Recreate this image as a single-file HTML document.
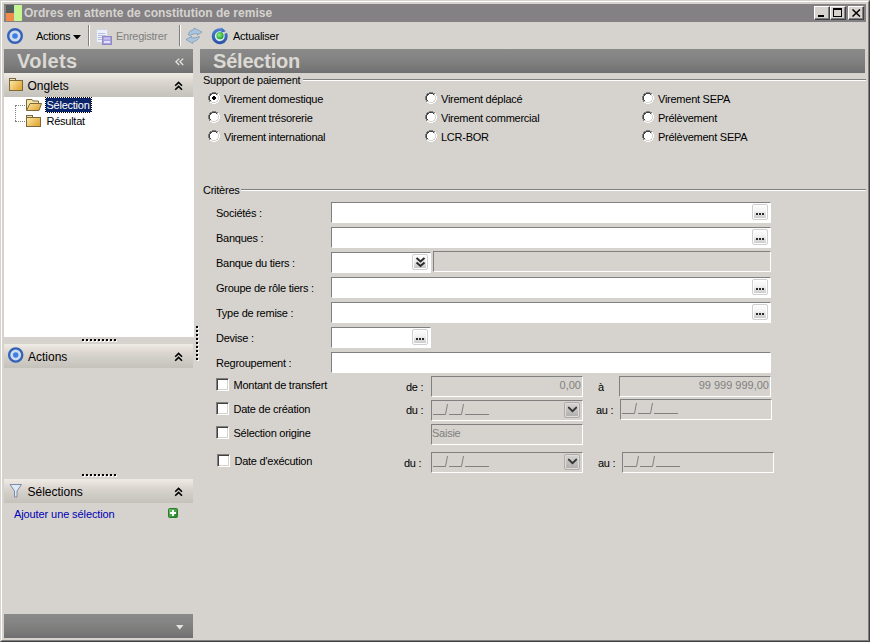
<!DOCTYPE html>
<html><head><meta charset="utf-8">
<style>
*{margin:0;padding:0;box-sizing:border-box}
html,body{width:870px;height:642px;overflow:hidden;background:#d6d3ce;font-family:"Liberation Sans",sans-serif;font-size:11px;color:#000}
.a{position:absolute}
.t{position:absolute;white-space:nowrap;line-height:13px;font-size:11px;letter-spacing:-0.25px}
.hd{position:absolute;background:linear-gradient(#8a8a8a,#848484 35%,#7b7b7a 70%,#6f6f71)}
.hl{position:absolute;background:linear-gradient(#eeebe5,#e8e3dd 15%,#ddd7d1 35%,#d1cdc7 60%,#c5c1bb)}
.inp{position:absolute;background:#fff;border-top:1px solid #808080;border-left:1px solid #808080;border-right:1px solid #fff;border-bottom:1px solid #fff}
.dis{position:absolute;background:#d6d3ce;border-top:1px solid #808080;border-left:1px solid #808080;border-right:1px solid #fff;border-bottom:1px solid #fff}
.ell{position:absolute;width:16px;height:16px;border:1px solid #cfcfcf;border-radius:2px;background:linear-gradient(#fdfdfd,#f4f4f4 40%,#c6c6c6);box-shadow:inset 0 0 0 1px #fff}
.chk{position:absolute;width:13px;height:13px;background:#fff;border-top:1px solid #808080;border-left:1px solid #808080;border-right:1px solid #fff;border-bottom:1px solid #fff;box-shadow:inset 1px 1px 0 #404040, inset -1px -1px 0 #d6d3ce}
.gl{position:absolute;height:2px;border-top:1px solid #808080;border-bottom:1px solid #fff}
.big{position:absolute;white-space:nowrap;font-size:19px;font-weight:bold;color:#dcd9d4;line-height:22px}
.dd{position:absolute;width:16px;height:16px;border:1px solid #cfcfcf;border-radius:2px;background:linear-gradient(#fdfdfd,#f0f0f0 40%,#c0c0c0);box-shadow:inset 0 0 0 1px #fff}
.ddd{position:absolute;width:16px;height:16px;border:1px solid #aeacaa;border-radius:2px;background:linear-gradient(#d6d4d2,#b0aeac);box-shadow:inset 0 0 0 1px #dedcda}
.gray{color:#808080}
.cb{position:absolute;width:16px;height:14px;background:#d6d3ce;border-top:1px solid #fff;border-left:1px solid #fff;border-right:1px solid #404040;border-bottom:1px solid #404040;box-shadow:inset -1px -1px 0 #808080}
</style></head><body>
<div class="a" style="left:0;top:0;width:870px;height:642px;border-top:1px solid #d6d3ce;border-left:1px solid #d6d3ce;border-right:1px solid #404040;border-bottom:1px solid #404040"></div>
<div class="a" style="left:1px;top:1px;width:868px;height:640px;border-top:1px solid #fff;border-left:1px solid #fff;border-right:1px solid #808080;border-bottom:1px solid #808080"></div>
<div class="a" style="left:4px;top:4px;width:862px;height:18px;background:#838184"></div>
<div class="a" style="left:6px;top:5px;width:8px;height:8px;background:#575d5b"></div>
<div class="a" style="left:6px;top:13px;width:8px;height:8px;background:#f28a4c"></div>
<div class="a" style="left:14px;top:5px;width:8px;height:16px;background:linear-gradient(90deg,#b8f0c0 0 1px,#c6f68e 1px)"></div>
<div class="t" style="left:24px;top:7px;font-weight:bold;color:#d6d3ce;letter-spacing:0;font-size:12px">Ordres en attente de constitution de remise</div>
<div class="cb" style="left:814px;top:6px"><div class="a" style="left:3px;top:8px;width:6px;height:2px;background:#000"></div></div>
<div class="cb" style="left:830px;top:6px"><div class="a" style="left:2px;top:1px;width:9px;height:9px;border:1px solid #000;border-top-width:2px"></div></div>
<div class="cb" style="left:848px;top:6px"><svg class="a" style="left:3px;top:2px" width="9" height="8" viewBox="0 0 9 8"><path d="M0.5 0.5L8 7.5M8 0.5L0.5 7.5" stroke="#000" stroke-width="1.5"/></svg></div>
<svg class="a" style="left:6px;top:27px" width="18" height="18" viewBox="0 0 18 18"><circle cx="9" cy="9" r="6.8" fill="#cfdcf0" stroke="#3562b6" stroke-width="2.4"/><circle cx="9" cy="9" r="2.8" fill="#3f7fe0"/></svg>
<div class="t" style="left:36px;top:30px">Actions</div>
<svg class="a" style="left:73px;top:35px" width="8" height="5"><path d="M0 0H8L4 4.5Z" fill="#000"/></svg>
<div class="a" style="left:88px;top:25px;width:2px;height:21px;border-left:1px solid #808080;border-right:1px solid #fff"></div>
<svg class="a" style="left:95px;top:27px" width="18" height="19" viewBox="0 0 18 19"><rect x="1.5" y="2.5" width="11" height="13" fill="#eef0f8" stroke="#d0d4e4"/><path d="M3 6.5H10M3 8.5H11M3 10.5H9M3 12.5H8" stroke="#b0b8dc" stroke-width="0.9"/><rect x="7.5" y="9.5" width="9" height="8" fill="#a8a0d8" stroke="#9088c8"/><rect x="9" y="14" width="6" height="2" fill="#e4e0fa"/><rect x="9" y="10.5" width="6" height="2" fill="#c8c4ec"/></svg>
<div class="t gray" style="left:116px;top:30px">Enregistrer</div>
<div class="a" style="left:179px;top:25px;width:2px;height:21px;border-left:1px solid #808080;border-right:1px solid #fff"></div>
<svg class="a" style="left:182px;top:25px" width="24" height="22" viewBox="0 0 24 22"><path d="M6 9.5Q7 5.5 12 4.5V3L20 7L15.5 10V8.5Q11 8.5 8 10.5Z" fill="#a9c6de" stroke="#7f98b8" stroke-width="0.8" stroke-linejoin="round"/><path d="M4 14.5L9.5 11.5V13Q14 13 17.5 11.5Q16.5 15.5 10.5 17V18.5Z" fill="#a9c6de" stroke="#7f98b8" stroke-width="0.8" stroke-linejoin="round"/></svg>
<svg class="a" style="left:210px;top:27px" width="20" height="20" viewBox="0 0 20 20"><defs><radialGradient id="gb" cx="0.4" cy="0.4" r="0.6"><stop offset="0" stop-color="#90f080"/><stop offset="1" stop-color="#20a030"/></radialGradient><linearGradient id="rb" x1="0" y1="0" x2="0" y2="1"><stop offset="0" stop-color="#4a7cd0"/><stop offset="1" stop-color="#2c54a8"/></linearGradient></defs><circle cx="9.8" cy="9.2" r="5.3" fill="#d8ecf0"/><path d="M15.69 6.45A6.5 6.5 0 1 1 11.48 2.92" fill="none" stroke="url(#rb)" stroke-width="3"/><path d="M11.5 0.6L15.8 4.2L11.2 5.8Z" fill="#3a6cc8"/><circle cx="10" cy="8.7" r="3.6" fill="url(#gb)"/></svg>
<div class="t" style="left:233px;top:30px">Actualiser</div>
<div class="hd" style="left:4px;top:49px;width:189px;height:24px"></div>
<div class="big" style="left:17px;top:50px;letter-spacing:0.3px;font-size:20px">Volets</div>
<svg class="a" style="left:175px;top:58px" width="10" height="9" viewBox="0 0 10 9"><path d="M4.2 0.6L0.9 3.8L4.2 7M8.2 0.6L4.9 3.8L8.2 7" stroke="#e6e4e0" stroke-width="1.3" fill="none"/></svg>
<div class="hl" style="left:4px;top:73px;width:189px;height:24px"></div>
<svg class="a" style="left:8px;top:77px" width="16" height="15" viewBox="0 0 16 15"><defs><linearGradient id="fg1" x1="0" y1="0" x2="1" y2="0.6"><stop offset="0" stop-color="#fbeaa8"/><stop offset="1" stop-color="#e4a838"/></linearGradient></defs><rect x="1.5" y="1.5" width="6" height="2.5" fill="#ece2c4" stroke="#7c6838"/><rect x="1.5" y="3.5" width="13" height="10" fill="url(#fg1)" stroke="#7c6838"/></svg>
<div class="t" style="left:27.5px;top:80px;font-size:12px;letter-spacing:0">Onglets</div>
<svg class="a" style="left:174px;top:81px" width="10" height="10" viewBox="0 0 10 10"><path d="M1.2 4.8L4.6 1.4L8 4.8M1.2 8.8L4.6 5.4L8 8.8" stroke="#000" stroke-width="1.6" fill="none"/></svg>
<div class="a" style="left:4px;top:97px;width:190px;height:240px;background:#fff"></div>
<div class="a" style="left:15px;top:105px;width:1px;height:16px;border-left:1px dotted #808080"></div>
<div class="a" style="left:15px;top:105px;width:10px;height:1px;border-top:1px dotted #808080"></div>
<div class="a" style="left:15px;top:121px;width:10px;height:1px;border-top:1px dotted #808080"></div>
<svg class="a" style="left:25px;top:98px" width="18" height="14" viewBox="0 0 18 14"><defs><linearGradient id="fg2" x1="0" y1="0" x2="1" y2="0.6"><stop offset="0" stop-color="#fbeaa8"/><stop offset="1" stop-color="#e4a838"/></linearGradient></defs><path d="M1.5 12.5V1.5H7L8 3H13.5V5.5" fill="#f4e4a8" stroke="#7c6838"/><path d="M5 5.5H16.5L14 12.5H1.5Z" fill="url(#fg2)" stroke="#7c6838" stroke-linejoin="round"/></svg>
<div class="a" style="left:45px;top:97px;width:47px;height:16px;background:#0a246a"></div><div class="a" style="left:45px;top:97px;width:47px;height:1px;background:repeating-linear-gradient(90deg,#000 0 1px,#fff 1px 2px)"></div><div class="a" style="left:45px;top:112px;width:47px;height:1px;background:repeating-linear-gradient(90deg,#000 0 1px,#fff 1px 2px)"></div><div class="a" style="left:45px;top:97px;width:1px;height:16px;background:repeating-linear-gradient(180deg,#000 0 1px,#fff 1px 2px)"></div><div class="a" style="left:91px;top:97px;width:1px;height:16px;background:repeating-linear-gradient(180deg,#000 0 1px,#fff 1px 2px)"></div>
<div class="t" style="left:46.5px;top:99px;color:#fff">Sélection</div>
<svg class="a" style="left:25px;top:114px" width="17" height="14" viewBox="0 0 17 14"><defs><linearGradient id="fg3" x1="0" y1="0" x2="1" y2="0.6"><stop offset="0" stop-color="#fbeaa8"/><stop offset="1" stop-color="#e4a838"/></linearGradient></defs><rect x="1.5" y="1.5" width="6" height="2.5" fill="#ece2c4" stroke="#7c6838"/><rect x="1.5" y="3.5" width="14" height="9" fill="url(#fg3)" stroke="#7c6838"/></svg>
<div class="t" style="left:46.5px;top:115px">Résultat</div>
<div class="a" style="left:83px;top:340px;width:34px;height:2px;background:repeating-linear-gradient(90deg,#fff 0 2px,transparent 2px 4px)"></div><div class="a" style="left:82px;top:339px;width:34px;height:2px;background:repeating-linear-gradient(90deg,#000 0 2px,transparent 2px 4px)"></div>
<div class="hl" style="left:4px;top:344px;width:189px;height:24px"></div>
<svg class="a" style="left:7px;top:346px" width="18" height="18" viewBox="0 0 18 18"><circle cx="8.7" cy="9" r="6.6" fill="#cfdcf0" stroke="#3562b6" stroke-width="2.3"/><circle cx="8.7" cy="9" r="2.7" fill="#3f7fe0"/></svg>
<div class="t" style="left:28px;top:351px;font-size:12px;letter-spacing:0">Actions</div>
<svg class="a" style="left:174px;top:352px" width="10" height="10" viewBox="0 0 10 10"><path d="M1.2 4.8L4.6 1.4L8 4.8M1.2 8.8L4.6 5.4L8 8.8" stroke="#000" stroke-width="1.6" fill="none"/></svg>
<div class="a" style="left:83px;top:475px;width:34px;height:2px;background:repeating-linear-gradient(90deg,#fff 0 2px,transparent 2px 4px)"></div><div class="a" style="left:82px;top:474px;width:34px;height:2px;background:repeating-linear-gradient(90deg,#000 0 2px,transparent 2px 4px)"></div>
<div class="hl" style="left:4px;top:479px;width:189px;height:24px"></div>
<svg class="a" style="left:9px;top:483px" width="14" height="15" viewBox="0 0 14 15"><path d="M1 1.5H12.5L8 8V14H5.5V8Z" fill="#dde9f6" stroke="#7c8ca4" stroke-linejoin="round"/></svg>
<div class="t" style="left:27.5px;top:486px;font-size:12px;letter-spacing:0">Sélections</div>
<svg class="a" style="left:174px;top:487px" width="10" height="10" viewBox="0 0 10 10"><path d="M1.2 4.8L4.6 1.4L8 4.8M1.2 8.8L4.6 5.4L8 8.8" stroke="#000" stroke-width="1.6" fill="none"/></svg>
<div class="t" style="left:14px;top:508px;color:#0000b4;letter-spacing:-0.1px">Ajouter une sélection</div>
<svg class="a" style="left:168px;top:508px" width="10" height="10" viewBox="0 0 10 10"><defs><linearGradient id="gp" x1="0" y1="0" x2="1" y2="1"><stop offset="0" stop-color="#70c870"/><stop offset="1" stop-color="#1c7c1c"/></linearGradient></defs><rect x="0.5" y="0.5" width="9" height="9" rx="1" fill="url(#gp)" stroke="#2a7a2a"/><path d="M5 2V8M2 5H8" stroke="#fff" stroke-width="2"/></svg>
<div class="hd" style="left:4px;top:614px;width:189px;height:24px"></div>
<svg class="a" style="left:176px;top:625px" width="8" height="5"><path d="M0 0H7.5L3.75 4.5Z" fill="#e6e4e0"/></svg>
<div class="a" style="left:197px;top:327px;width:2px;height:35px;background:repeating-linear-gradient(180deg,#fff 0 2px,transparent 2px 4px)"></div><div class="a" style="left:196px;top:326px;width:2px;height:35px;background:repeating-linear-gradient(180deg,#000 0 2px,transparent 2px 4px)"></div>
<div class="hd" style="left:200px;top:49px;width:665px;height:24px"></div>
<div class="big" style="left:213px;top:50px;letter-spacing:-0.2px;font-size:20px">Sélection</div>
<div class="t" style="left:203px;top:74px">Support de paiement</div>
<div class="gl" style="left:303px;top:79px;width:563px"></div>
<svg class="a" style="left:208px;top:92px" width="12" height="12" shape-rendering="crispEdges"><rect x="4" y="2" width="4" height="1" fill="#fff"/><rect x="3" y="3" width="6" height="1" fill="#fff"/><rect x="2" y="4" width="8" height="1" fill="#fff"/><rect x="2" y="5" width="8" height="1" fill="#fff"/><rect x="2" y="6" width="8" height="1" fill="#fff"/><rect x="2" y="7" width="8" height="1" fill="#fff"/><rect x="3" y="8" width="6" height="1" fill="#fff"/><rect x="4" y="9" width="4" height="1" fill="#fff"/><rect x="4" y="0" width="1" height="1" fill="#808080"/><rect x="5" y="0" width="1" height="1" fill="#808080"/><rect x="6" y="0" width="1" height="1" fill="#808080"/><rect x="7" y="0" width="1" height="1" fill="#808080"/><rect x="2" y="1" width="1" height="1" fill="#808080"/><rect x="3" y="1" width="1" height="1" fill="#808080"/><rect x="8" y="1" width="1" height="1" fill="#808080"/><rect x="9" y="1" width="1" height="1" fill="#808080"/><rect x="1" y="2" width="1" height="1" fill="#808080"/><rect x="10" y="2" width="1" height="1" fill="#ffffff"/><rect x="1" y="3" width="1" height="1" fill="#808080"/><rect x="10" y="3" width="1" height="1" fill="#ffffff"/><rect x="0" y="4" width="1" height="1" fill="#808080"/><rect x="11" y="4" width="1" height="1" fill="#ffffff"/><rect x="0" y="5" width="1" height="1" fill="#808080"/><rect x="11" y="5" width="1" height="1" fill="#ffffff"/><rect x="0" y="6" width="1" height="1" fill="#808080"/><rect x="11" y="6" width="1" height="1" fill="#ffffff"/><rect x="0" y="7" width="1" height="1" fill="#808080"/><rect x="11" y="7" width="1" height="1" fill="#ffffff"/><rect x="1" y="8" width="1" height="1" fill="#808080"/><rect x="10" y="8" width="1" height="1" fill="#ffffff"/><rect x="1" y="9" width="1" height="1" fill="#808080"/><rect x="10" y="9" width="1" height="1" fill="#ffffff"/><rect x="2" y="10" width="1" height="1" fill="#ffffff"/><rect x="3" y="10" width="1" height="1" fill="#ffffff"/><rect x="8" y="10" width="1" height="1" fill="#ffffff"/><rect x="9" y="10" width="1" height="1" fill="#ffffff"/><rect x="4" y="11" width="1" height="1" fill="#ffffff"/><rect x="5" y="11" width="1" height="1" fill="#ffffff"/><rect x="6" y="11" width="1" height="1" fill="#ffffff"/><rect x="7" y="11" width="1" height="1" fill="#ffffff"/><rect x="4" y="1" width="1" height="1" fill="#404040"/><rect x="5" y="1" width="1" height="1" fill="#404040"/><rect x="6" y="1" width="1" height="1" fill="#404040"/><rect x="7" y="1" width="1" height="1" fill="#404040"/><rect x="2" y="2" width="1" height="1" fill="#404040"/><rect x="3" y="2" width="1" height="1" fill="#404040"/><rect x="8" y="2" width="1" height="1" fill="#404040"/><rect x="9" y="2" width="1" height="1" fill="#d6d3ce"/><rect x="2" y="3" width="1" height="1" fill="#404040"/><rect x="9" y="3" width="1" height="1" fill="#d6d3ce"/><rect x="1" y="4" width="1" height="1" fill="#404040"/><rect x="10" y="4" width="1" height="1" fill="#d6d3ce"/><rect x="1" y="5" width="1" height="1" fill="#404040"/><rect x="10" y="5" width="1" height="1" fill="#d6d3ce"/><rect x="1" y="6" width="1" height="1" fill="#404040"/><rect x="10" y="6" width="1" height="1" fill="#d6d3ce"/><rect x="1" y="7" width="1" height="1" fill="#404040"/><rect x="10" y="7" width="1" height="1" fill="#d6d3ce"/><rect x="2" y="8" width="1" height="1" fill="#404040"/><rect x="9" y="8" width="1" height="1" fill="#d6d3ce"/><rect x="2" y="9" width="1" height="1" fill="#d6d3ce"/><rect x="3" y="9" width="1" height="1" fill="#d6d3ce"/><rect x="8" y="9" width="1" height="1" fill="#d6d3ce"/><rect x="9" y="9" width="1" height="1" fill="#d6d3ce"/><rect x="4" y="10" width="1" height="1" fill="#d6d3ce"/><rect x="5" y="10" width="1" height="1" fill="#d6d3ce"/><rect x="6" y="10" width="1" height="1" fill="#d6d3ce"/><rect x="7" y="10" width="1" height="1" fill="#d6d3ce"/><rect x="4" y="5" width="4" height="2" fill="#000"/><rect x="5" y="4" width="2" height="4" fill="#000"/></svg>
<div class="t" style="left:224px;top:93px">Virement domestique</div>
<svg class="a" style="left:208px;top:111px" width="12" height="12" shape-rendering="crispEdges"><rect x="4" y="2" width="4" height="1" fill="#fff"/><rect x="3" y="3" width="6" height="1" fill="#fff"/><rect x="2" y="4" width="8" height="1" fill="#fff"/><rect x="2" y="5" width="8" height="1" fill="#fff"/><rect x="2" y="6" width="8" height="1" fill="#fff"/><rect x="2" y="7" width="8" height="1" fill="#fff"/><rect x="3" y="8" width="6" height="1" fill="#fff"/><rect x="4" y="9" width="4" height="1" fill="#fff"/><rect x="4" y="0" width="1" height="1" fill="#808080"/><rect x="5" y="0" width="1" height="1" fill="#808080"/><rect x="6" y="0" width="1" height="1" fill="#808080"/><rect x="7" y="0" width="1" height="1" fill="#808080"/><rect x="2" y="1" width="1" height="1" fill="#808080"/><rect x="3" y="1" width="1" height="1" fill="#808080"/><rect x="8" y="1" width="1" height="1" fill="#808080"/><rect x="9" y="1" width="1" height="1" fill="#808080"/><rect x="1" y="2" width="1" height="1" fill="#808080"/><rect x="10" y="2" width="1" height="1" fill="#ffffff"/><rect x="1" y="3" width="1" height="1" fill="#808080"/><rect x="10" y="3" width="1" height="1" fill="#ffffff"/><rect x="0" y="4" width="1" height="1" fill="#808080"/><rect x="11" y="4" width="1" height="1" fill="#ffffff"/><rect x="0" y="5" width="1" height="1" fill="#808080"/><rect x="11" y="5" width="1" height="1" fill="#ffffff"/><rect x="0" y="6" width="1" height="1" fill="#808080"/><rect x="11" y="6" width="1" height="1" fill="#ffffff"/><rect x="0" y="7" width="1" height="1" fill="#808080"/><rect x="11" y="7" width="1" height="1" fill="#ffffff"/><rect x="1" y="8" width="1" height="1" fill="#808080"/><rect x="10" y="8" width="1" height="1" fill="#ffffff"/><rect x="1" y="9" width="1" height="1" fill="#808080"/><rect x="10" y="9" width="1" height="1" fill="#ffffff"/><rect x="2" y="10" width="1" height="1" fill="#ffffff"/><rect x="3" y="10" width="1" height="1" fill="#ffffff"/><rect x="8" y="10" width="1" height="1" fill="#ffffff"/><rect x="9" y="10" width="1" height="1" fill="#ffffff"/><rect x="4" y="11" width="1" height="1" fill="#ffffff"/><rect x="5" y="11" width="1" height="1" fill="#ffffff"/><rect x="6" y="11" width="1" height="1" fill="#ffffff"/><rect x="7" y="11" width="1" height="1" fill="#ffffff"/><rect x="4" y="1" width="1" height="1" fill="#404040"/><rect x="5" y="1" width="1" height="1" fill="#404040"/><rect x="6" y="1" width="1" height="1" fill="#404040"/><rect x="7" y="1" width="1" height="1" fill="#404040"/><rect x="2" y="2" width="1" height="1" fill="#404040"/><rect x="3" y="2" width="1" height="1" fill="#404040"/><rect x="8" y="2" width="1" height="1" fill="#404040"/><rect x="9" y="2" width="1" height="1" fill="#d6d3ce"/><rect x="2" y="3" width="1" height="1" fill="#404040"/><rect x="9" y="3" width="1" height="1" fill="#d6d3ce"/><rect x="1" y="4" width="1" height="1" fill="#404040"/><rect x="10" y="4" width="1" height="1" fill="#d6d3ce"/><rect x="1" y="5" width="1" height="1" fill="#404040"/><rect x="10" y="5" width="1" height="1" fill="#d6d3ce"/><rect x="1" y="6" width="1" height="1" fill="#404040"/><rect x="10" y="6" width="1" height="1" fill="#d6d3ce"/><rect x="1" y="7" width="1" height="1" fill="#404040"/><rect x="10" y="7" width="1" height="1" fill="#d6d3ce"/><rect x="2" y="8" width="1" height="1" fill="#404040"/><rect x="9" y="8" width="1" height="1" fill="#d6d3ce"/><rect x="2" y="9" width="1" height="1" fill="#d6d3ce"/><rect x="3" y="9" width="1" height="1" fill="#d6d3ce"/><rect x="8" y="9" width="1" height="1" fill="#d6d3ce"/><rect x="9" y="9" width="1" height="1" fill="#d6d3ce"/><rect x="4" y="10" width="1" height="1" fill="#d6d3ce"/><rect x="5" y="10" width="1" height="1" fill="#d6d3ce"/><rect x="6" y="10" width="1" height="1" fill="#d6d3ce"/><rect x="7" y="10" width="1" height="1" fill="#d6d3ce"/></svg>
<div class="t" style="left:224px;top:112px">Virement trésorerie</div>
<svg class="a" style="left:208px;top:130px" width="12" height="12" shape-rendering="crispEdges"><rect x="4" y="2" width="4" height="1" fill="#fff"/><rect x="3" y="3" width="6" height="1" fill="#fff"/><rect x="2" y="4" width="8" height="1" fill="#fff"/><rect x="2" y="5" width="8" height="1" fill="#fff"/><rect x="2" y="6" width="8" height="1" fill="#fff"/><rect x="2" y="7" width="8" height="1" fill="#fff"/><rect x="3" y="8" width="6" height="1" fill="#fff"/><rect x="4" y="9" width="4" height="1" fill="#fff"/><rect x="4" y="0" width="1" height="1" fill="#808080"/><rect x="5" y="0" width="1" height="1" fill="#808080"/><rect x="6" y="0" width="1" height="1" fill="#808080"/><rect x="7" y="0" width="1" height="1" fill="#808080"/><rect x="2" y="1" width="1" height="1" fill="#808080"/><rect x="3" y="1" width="1" height="1" fill="#808080"/><rect x="8" y="1" width="1" height="1" fill="#808080"/><rect x="9" y="1" width="1" height="1" fill="#808080"/><rect x="1" y="2" width="1" height="1" fill="#808080"/><rect x="10" y="2" width="1" height="1" fill="#ffffff"/><rect x="1" y="3" width="1" height="1" fill="#808080"/><rect x="10" y="3" width="1" height="1" fill="#ffffff"/><rect x="0" y="4" width="1" height="1" fill="#808080"/><rect x="11" y="4" width="1" height="1" fill="#ffffff"/><rect x="0" y="5" width="1" height="1" fill="#808080"/><rect x="11" y="5" width="1" height="1" fill="#ffffff"/><rect x="0" y="6" width="1" height="1" fill="#808080"/><rect x="11" y="6" width="1" height="1" fill="#ffffff"/><rect x="0" y="7" width="1" height="1" fill="#808080"/><rect x="11" y="7" width="1" height="1" fill="#ffffff"/><rect x="1" y="8" width="1" height="1" fill="#808080"/><rect x="10" y="8" width="1" height="1" fill="#ffffff"/><rect x="1" y="9" width="1" height="1" fill="#808080"/><rect x="10" y="9" width="1" height="1" fill="#ffffff"/><rect x="2" y="10" width="1" height="1" fill="#ffffff"/><rect x="3" y="10" width="1" height="1" fill="#ffffff"/><rect x="8" y="10" width="1" height="1" fill="#ffffff"/><rect x="9" y="10" width="1" height="1" fill="#ffffff"/><rect x="4" y="11" width="1" height="1" fill="#ffffff"/><rect x="5" y="11" width="1" height="1" fill="#ffffff"/><rect x="6" y="11" width="1" height="1" fill="#ffffff"/><rect x="7" y="11" width="1" height="1" fill="#ffffff"/><rect x="4" y="1" width="1" height="1" fill="#404040"/><rect x="5" y="1" width="1" height="1" fill="#404040"/><rect x="6" y="1" width="1" height="1" fill="#404040"/><rect x="7" y="1" width="1" height="1" fill="#404040"/><rect x="2" y="2" width="1" height="1" fill="#404040"/><rect x="3" y="2" width="1" height="1" fill="#404040"/><rect x="8" y="2" width="1" height="1" fill="#404040"/><rect x="9" y="2" width="1" height="1" fill="#d6d3ce"/><rect x="2" y="3" width="1" height="1" fill="#404040"/><rect x="9" y="3" width="1" height="1" fill="#d6d3ce"/><rect x="1" y="4" width="1" height="1" fill="#404040"/><rect x="10" y="4" width="1" height="1" fill="#d6d3ce"/><rect x="1" y="5" width="1" height="1" fill="#404040"/><rect x="10" y="5" width="1" height="1" fill="#d6d3ce"/><rect x="1" y="6" width="1" height="1" fill="#404040"/><rect x="10" y="6" width="1" height="1" fill="#d6d3ce"/><rect x="1" y="7" width="1" height="1" fill="#404040"/><rect x="10" y="7" width="1" height="1" fill="#d6d3ce"/><rect x="2" y="8" width="1" height="1" fill="#404040"/><rect x="9" y="8" width="1" height="1" fill="#d6d3ce"/><rect x="2" y="9" width="1" height="1" fill="#d6d3ce"/><rect x="3" y="9" width="1" height="1" fill="#d6d3ce"/><rect x="8" y="9" width="1" height="1" fill="#d6d3ce"/><rect x="9" y="9" width="1" height="1" fill="#d6d3ce"/><rect x="4" y="10" width="1" height="1" fill="#d6d3ce"/><rect x="5" y="10" width="1" height="1" fill="#d6d3ce"/><rect x="6" y="10" width="1" height="1" fill="#d6d3ce"/><rect x="7" y="10" width="1" height="1" fill="#d6d3ce"/></svg>
<div class="t" style="left:224px;top:131px">Virement international</div>
<svg class="a" style="left:425px;top:92px" width="12" height="12" shape-rendering="crispEdges"><rect x="4" y="2" width="4" height="1" fill="#fff"/><rect x="3" y="3" width="6" height="1" fill="#fff"/><rect x="2" y="4" width="8" height="1" fill="#fff"/><rect x="2" y="5" width="8" height="1" fill="#fff"/><rect x="2" y="6" width="8" height="1" fill="#fff"/><rect x="2" y="7" width="8" height="1" fill="#fff"/><rect x="3" y="8" width="6" height="1" fill="#fff"/><rect x="4" y="9" width="4" height="1" fill="#fff"/><rect x="4" y="0" width="1" height="1" fill="#808080"/><rect x="5" y="0" width="1" height="1" fill="#808080"/><rect x="6" y="0" width="1" height="1" fill="#808080"/><rect x="7" y="0" width="1" height="1" fill="#808080"/><rect x="2" y="1" width="1" height="1" fill="#808080"/><rect x="3" y="1" width="1" height="1" fill="#808080"/><rect x="8" y="1" width="1" height="1" fill="#808080"/><rect x="9" y="1" width="1" height="1" fill="#808080"/><rect x="1" y="2" width="1" height="1" fill="#808080"/><rect x="10" y="2" width="1" height="1" fill="#ffffff"/><rect x="1" y="3" width="1" height="1" fill="#808080"/><rect x="10" y="3" width="1" height="1" fill="#ffffff"/><rect x="0" y="4" width="1" height="1" fill="#808080"/><rect x="11" y="4" width="1" height="1" fill="#ffffff"/><rect x="0" y="5" width="1" height="1" fill="#808080"/><rect x="11" y="5" width="1" height="1" fill="#ffffff"/><rect x="0" y="6" width="1" height="1" fill="#808080"/><rect x="11" y="6" width="1" height="1" fill="#ffffff"/><rect x="0" y="7" width="1" height="1" fill="#808080"/><rect x="11" y="7" width="1" height="1" fill="#ffffff"/><rect x="1" y="8" width="1" height="1" fill="#808080"/><rect x="10" y="8" width="1" height="1" fill="#ffffff"/><rect x="1" y="9" width="1" height="1" fill="#808080"/><rect x="10" y="9" width="1" height="1" fill="#ffffff"/><rect x="2" y="10" width="1" height="1" fill="#ffffff"/><rect x="3" y="10" width="1" height="1" fill="#ffffff"/><rect x="8" y="10" width="1" height="1" fill="#ffffff"/><rect x="9" y="10" width="1" height="1" fill="#ffffff"/><rect x="4" y="11" width="1" height="1" fill="#ffffff"/><rect x="5" y="11" width="1" height="1" fill="#ffffff"/><rect x="6" y="11" width="1" height="1" fill="#ffffff"/><rect x="7" y="11" width="1" height="1" fill="#ffffff"/><rect x="4" y="1" width="1" height="1" fill="#404040"/><rect x="5" y="1" width="1" height="1" fill="#404040"/><rect x="6" y="1" width="1" height="1" fill="#404040"/><rect x="7" y="1" width="1" height="1" fill="#404040"/><rect x="2" y="2" width="1" height="1" fill="#404040"/><rect x="3" y="2" width="1" height="1" fill="#404040"/><rect x="8" y="2" width="1" height="1" fill="#404040"/><rect x="9" y="2" width="1" height="1" fill="#d6d3ce"/><rect x="2" y="3" width="1" height="1" fill="#404040"/><rect x="9" y="3" width="1" height="1" fill="#d6d3ce"/><rect x="1" y="4" width="1" height="1" fill="#404040"/><rect x="10" y="4" width="1" height="1" fill="#d6d3ce"/><rect x="1" y="5" width="1" height="1" fill="#404040"/><rect x="10" y="5" width="1" height="1" fill="#d6d3ce"/><rect x="1" y="6" width="1" height="1" fill="#404040"/><rect x="10" y="6" width="1" height="1" fill="#d6d3ce"/><rect x="1" y="7" width="1" height="1" fill="#404040"/><rect x="10" y="7" width="1" height="1" fill="#d6d3ce"/><rect x="2" y="8" width="1" height="1" fill="#404040"/><rect x="9" y="8" width="1" height="1" fill="#d6d3ce"/><rect x="2" y="9" width="1" height="1" fill="#d6d3ce"/><rect x="3" y="9" width="1" height="1" fill="#d6d3ce"/><rect x="8" y="9" width="1" height="1" fill="#d6d3ce"/><rect x="9" y="9" width="1" height="1" fill="#d6d3ce"/><rect x="4" y="10" width="1" height="1" fill="#d6d3ce"/><rect x="5" y="10" width="1" height="1" fill="#d6d3ce"/><rect x="6" y="10" width="1" height="1" fill="#d6d3ce"/><rect x="7" y="10" width="1" height="1" fill="#d6d3ce"/></svg>
<div class="t" style="left:441px;top:93px">Virement déplacé</div>
<svg class="a" style="left:425px;top:111px" width="12" height="12" shape-rendering="crispEdges"><rect x="4" y="2" width="4" height="1" fill="#fff"/><rect x="3" y="3" width="6" height="1" fill="#fff"/><rect x="2" y="4" width="8" height="1" fill="#fff"/><rect x="2" y="5" width="8" height="1" fill="#fff"/><rect x="2" y="6" width="8" height="1" fill="#fff"/><rect x="2" y="7" width="8" height="1" fill="#fff"/><rect x="3" y="8" width="6" height="1" fill="#fff"/><rect x="4" y="9" width="4" height="1" fill="#fff"/><rect x="4" y="0" width="1" height="1" fill="#808080"/><rect x="5" y="0" width="1" height="1" fill="#808080"/><rect x="6" y="0" width="1" height="1" fill="#808080"/><rect x="7" y="0" width="1" height="1" fill="#808080"/><rect x="2" y="1" width="1" height="1" fill="#808080"/><rect x="3" y="1" width="1" height="1" fill="#808080"/><rect x="8" y="1" width="1" height="1" fill="#808080"/><rect x="9" y="1" width="1" height="1" fill="#808080"/><rect x="1" y="2" width="1" height="1" fill="#808080"/><rect x="10" y="2" width="1" height="1" fill="#ffffff"/><rect x="1" y="3" width="1" height="1" fill="#808080"/><rect x="10" y="3" width="1" height="1" fill="#ffffff"/><rect x="0" y="4" width="1" height="1" fill="#808080"/><rect x="11" y="4" width="1" height="1" fill="#ffffff"/><rect x="0" y="5" width="1" height="1" fill="#808080"/><rect x="11" y="5" width="1" height="1" fill="#ffffff"/><rect x="0" y="6" width="1" height="1" fill="#808080"/><rect x="11" y="6" width="1" height="1" fill="#ffffff"/><rect x="0" y="7" width="1" height="1" fill="#808080"/><rect x="11" y="7" width="1" height="1" fill="#ffffff"/><rect x="1" y="8" width="1" height="1" fill="#808080"/><rect x="10" y="8" width="1" height="1" fill="#ffffff"/><rect x="1" y="9" width="1" height="1" fill="#808080"/><rect x="10" y="9" width="1" height="1" fill="#ffffff"/><rect x="2" y="10" width="1" height="1" fill="#ffffff"/><rect x="3" y="10" width="1" height="1" fill="#ffffff"/><rect x="8" y="10" width="1" height="1" fill="#ffffff"/><rect x="9" y="10" width="1" height="1" fill="#ffffff"/><rect x="4" y="11" width="1" height="1" fill="#ffffff"/><rect x="5" y="11" width="1" height="1" fill="#ffffff"/><rect x="6" y="11" width="1" height="1" fill="#ffffff"/><rect x="7" y="11" width="1" height="1" fill="#ffffff"/><rect x="4" y="1" width="1" height="1" fill="#404040"/><rect x="5" y="1" width="1" height="1" fill="#404040"/><rect x="6" y="1" width="1" height="1" fill="#404040"/><rect x="7" y="1" width="1" height="1" fill="#404040"/><rect x="2" y="2" width="1" height="1" fill="#404040"/><rect x="3" y="2" width="1" height="1" fill="#404040"/><rect x="8" y="2" width="1" height="1" fill="#404040"/><rect x="9" y="2" width="1" height="1" fill="#d6d3ce"/><rect x="2" y="3" width="1" height="1" fill="#404040"/><rect x="9" y="3" width="1" height="1" fill="#d6d3ce"/><rect x="1" y="4" width="1" height="1" fill="#404040"/><rect x="10" y="4" width="1" height="1" fill="#d6d3ce"/><rect x="1" y="5" width="1" height="1" fill="#404040"/><rect x="10" y="5" width="1" height="1" fill="#d6d3ce"/><rect x="1" y="6" width="1" height="1" fill="#404040"/><rect x="10" y="6" width="1" height="1" fill="#d6d3ce"/><rect x="1" y="7" width="1" height="1" fill="#404040"/><rect x="10" y="7" width="1" height="1" fill="#d6d3ce"/><rect x="2" y="8" width="1" height="1" fill="#404040"/><rect x="9" y="8" width="1" height="1" fill="#d6d3ce"/><rect x="2" y="9" width="1" height="1" fill="#d6d3ce"/><rect x="3" y="9" width="1" height="1" fill="#d6d3ce"/><rect x="8" y="9" width="1" height="1" fill="#d6d3ce"/><rect x="9" y="9" width="1" height="1" fill="#d6d3ce"/><rect x="4" y="10" width="1" height="1" fill="#d6d3ce"/><rect x="5" y="10" width="1" height="1" fill="#d6d3ce"/><rect x="6" y="10" width="1" height="1" fill="#d6d3ce"/><rect x="7" y="10" width="1" height="1" fill="#d6d3ce"/></svg>
<div class="t" style="left:441px;top:112px">Virement commercial</div>
<svg class="a" style="left:425px;top:130px" width="12" height="12" shape-rendering="crispEdges"><rect x="4" y="2" width="4" height="1" fill="#fff"/><rect x="3" y="3" width="6" height="1" fill="#fff"/><rect x="2" y="4" width="8" height="1" fill="#fff"/><rect x="2" y="5" width="8" height="1" fill="#fff"/><rect x="2" y="6" width="8" height="1" fill="#fff"/><rect x="2" y="7" width="8" height="1" fill="#fff"/><rect x="3" y="8" width="6" height="1" fill="#fff"/><rect x="4" y="9" width="4" height="1" fill="#fff"/><rect x="4" y="0" width="1" height="1" fill="#808080"/><rect x="5" y="0" width="1" height="1" fill="#808080"/><rect x="6" y="0" width="1" height="1" fill="#808080"/><rect x="7" y="0" width="1" height="1" fill="#808080"/><rect x="2" y="1" width="1" height="1" fill="#808080"/><rect x="3" y="1" width="1" height="1" fill="#808080"/><rect x="8" y="1" width="1" height="1" fill="#808080"/><rect x="9" y="1" width="1" height="1" fill="#808080"/><rect x="1" y="2" width="1" height="1" fill="#808080"/><rect x="10" y="2" width="1" height="1" fill="#ffffff"/><rect x="1" y="3" width="1" height="1" fill="#808080"/><rect x="10" y="3" width="1" height="1" fill="#ffffff"/><rect x="0" y="4" width="1" height="1" fill="#808080"/><rect x="11" y="4" width="1" height="1" fill="#ffffff"/><rect x="0" y="5" width="1" height="1" fill="#808080"/><rect x="11" y="5" width="1" height="1" fill="#ffffff"/><rect x="0" y="6" width="1" height="1" fill="#808080"/><rect x="11" y="6" width="1" height="1" fill="#ffffff"/><rect x="0" y="7" width="1" height="1" fill="#808080"/><rect x="11" y="7" width="1" height="1" fill="#ffffff"/><rect x="1" y="8" width="1" height="1" fill="#808080"/><rect x="10" y="8" width="1" height="1" fill="#ffffff"/><rect x="1" y="9" width="1" height="1" fill="#808080"/><rect x="10" y="9" width="1" height="1" fill="#ffffff"/><rect x="2" y="10" width="1" height="1" fill="#ffffff"/><rect x="3" y="10" width="1" height="1" fill="#ffffff"/><rect x="8" y="10" width="1" height="1" fill="#ffffff"/><rect x="9" y="10" width="1" height="1" fill="#ffffff"/><rect x="4" y="11" width="1" height="1" fill="#ffffff"/><rect x="5" y="11" width="1" height="1" fill="#ffffff"/><rect x="6" y="11" width="1" height="1" fill="#ffffff"/><rect x="7" y="11" width="1" height="1" fill="#ffffff"/><rect x="4" y="1" width="1" height="1" fill="#404040"/><rect x="5" y="1" width="1" height="1" fill="#404040"/><rect x="6" y="1" width="1" height="1" fill="#404040"/><rect x="7" y="1" width="1" height="1" fill="#404040"/><rect x="2" y="2" width="1" height="1" fill="#404040"/><rect x="3" y="2" width="1" height="1" fill="#404040"/><rect x="8" y="2" width="1" height="1" fill="#404040"/><rect x="9" y="2" width="1" height="1" fill="#d6d3ce"/><rect x="2" y="3" width="1" height="1" fill="#404040"/><rect x="9" y="3" width="1" height="1" fill="#d6d3ce"/><rect x="1" y="4" width="1" height="1" fill="#404040"/><rect x="10" y="4" width="1" height="1" fill="#d6d3ce"/><rect x="1" y="5" width="1" height="1" fill="#404040"/><rect x="10" y="5" width="1" height="1" fill="#d6d3ce"/><rect x="1" y="6" width="1" height="1" fill="#404040"/><rect x="10" y="6" width="1" height="1" fill="#d6d3ce"/><rect x="1" y="7" width="1" height="1" fill="#404040"/><rect x="10" y="7" width="1" height="1" fill="#d6d3ce"/><rect x="2" y="8" width="1" height="1" fill="#404040"/><rect x="9" y="8" width="1" height="1" fill="#d6d3ce"/><rect x="2" y="9" width="1" height="1" fill="#d6d3ce"/><rect x="3" y="9" width="1" height="1" fill="#d6d3ce"/><rect x="8" y="9" width="1" height="1" fill="#d6d3ce"/><rect x="9" y="9" width="1" height="1" fill="#d6d3ce"/><rect x="4" y="10" width="1" height="1" fill="#d6d3ce"/><rect x="5" y="10" width="1" height="1" fill="#d6d3ce"/><rect x="6" y="10" width="1" height="1" fill="#d6d3ce"/><rect x="7" y="10" width="1" height="1" fill="#d6d3ce"/></svg>
<div class="t" style="left:441px;top:131px">LCR-BOR</div>
<svg class="a" style="left:642px;top:92px" width="12" height="12" shape-rendering="crispEdges"><rect x="4" y="2" width="4" height="1" fill="#fff"/><rect x="3" y="3" width="6" height="1" fill="#fff"/><rect x="2" y="4" width="8" height="1" fill="#fff"/><rect x="2" y="5" width="8" height="1" fill="#fff"/><rect x="2" y="6" width="8" height="1" fill="#fff"/><rect x="2" y="7" width="8" height="1" fill="#fff"/><rect x="3" y="8" width="6" height="1" fill="#fff"/><rect x="4" y="9" width="4" height="1" fill="#fff"/><rect x="4" y="0" width="1" height="1" fill="#808080"/><rect x="5" y="0" width="1" height="1" fill="#808080"/><rect x="6" y="0" width="1" height="1" fill="#808080"/><rect x="7" y="0" width="1" height="1" fill="#808080"/><rect x="2" y="1" width="1" height="1" fill="#808080"/><rect x="3" y="1" width="1" height="1" fill="#808080"/><rect x="8" y="1" width="1" height="1" fill="#808080"/><rect x="9" y="1" width="1" height="1" fill="#808080"/><rect x="1" y="2" width="1" height="1" fill="#808080"/><rect x="10" y="2" width="1" height="1" fill="#ffffff"/><rect x="1" y="3" width="1" height="1" fill="#808080"/><rect x="10" y="3" width="1" height="1" fill="#ffffff"/><rect x="0" y="4" width="1" height="1" fill="#808080"/><rect x="11" y="4" width="1" height="1" fill="#ffffff"/><rect x="0" y="5" width="1" height="1" fill="#808080"/><rect x="11" y="5" width="1" height="1" fill="#ffffff"/><rect x="0" y="6" width="1" height="1" fill="#808080"/><rect x="11" y="6" width="1" height="1" fill="#ffffff"/><rect x="0" y="7" width="1" height="1" fill="#808080"/><rect x="11" y="7" width="1" height="1" fill="#ffffff"/><rect x="1" y="8" width="1" height="1" fill="#808080"/><rect x="10" y="8" width="1" height="1" fill="#ffffff"/><rect x="1" y="9" width="1" height="1" fill="#808080"/><rect x="10" y="9" width="1" height="1" fill="#ffffff"/><rect x="2" y="10" width="1" height="1" fill="#ffffff"/><rect x="3" y="10" width="1" height="1" fill="#ffffff"/><rect x="8" y="10" width="1" height="1" fill="#ffffff"/><rect x="9" y="10" width="1" height="1" fill="#ffffff"/><rect x="4" y="11" width="1" height="1" fill="#ffffff"/><rect x="5" y="11" width="1" height="1" fill="#ffffff"/><rect x="6" y="11" width="1" height="1" fill="#ffffff"/><rect x="7" y="11" width="1" height="1" fill="#ffffff"/><rect x="4" y="1" width="1" height="1" fill="#404040"/><rect x="5" y="1" width="1" height="1" fill="#404040"/><rect x="6" y="1" width="1" height="1" fill="#404040"/><rect x="7" y="1" width="1" height="1" fill="#404040"/><rect x="2" y="2" width="1" height="1" fill="#404040"/><rect x="3" y="2" width="1" height="1" fill="#404040"/><rect x="8" y="2" width="1" height="1" fill="#404040"/><rect x="9" y="2" width="1" height="1" fill="#d6d3ce"/><rect x="2" y="3" width="1" height="1" fill="#404040"/><rect x="9" y="3" width="1" height="1" fill="#d6d3ce"/><rect x="1" y="4" width="1" height="1" fill="#404040"/><rect x="10" y="4" width="1" height="1" fill="#d6d3ce"/><rect x="1" y="5" width="1" height="1" fill="#404040"/><rect x="10" y="5" width="1" height="1" fill="#d6d3ce"/><rect x="1" y="6" width="1" height="1" fill="#404040"/><rect x="10" y="6" width="1" height="1" fill="#d6d3ce"/><rect x="1" y="7" width="1" height="1" fill="#404040"/><rect x="10" y="7" width="1" height="1" fill="#d6d3ce"/><rect x="2" y="8" width="1" height="1" fill="#404040"/><rect x="9" y="8" width="1" height="1" fill="#d6d3ce"/><rect x="2" y="9" width="1" height="1" fill="#d6d3ce"/><rect x="3" y="9" width="1" height="1" fill="#d6d3ce"/><rect x="8" y="9" width="1" height="1" fill="#d6d3ce"/><rect x="9" y="9" width="1" height="1" fill="#d6d3ce"/><rect x="4" y="10" width="1" height="1" fill="#d6d3ce"/><rect x="5" y="10" width="1" height="1" fill="#d6d3ce"/><rect x="6" y="10" width="1" height="1" fill="#d6d3ce"/><rect x="7" y="10" width="1" height="1" fill="#d6d3ce"/></svg>
<div class="t" style="left:658px;top:93px">Virement SEPA</div>
<svg class="a" style="left:642px;top:111px" width="12" height="12" shape-rendering="crispEdges"><rect x="4" y="2" width="4" height="1" fill="#fff"/><rect x="3" y="3" width="6" height="1" fill="#fff"/><rect x="2" y="4" width="8" height="1" fill="#fff"/><rect x="2" y="5" width="8" height="1" fill="#fff"/><rect x="2" y="6" width="8" height="1" fill="#fff"/><rect x="2" y="7" width="8" height="1" fill="#fff"/><rect x="3" y="8" width="6" height="1" fill="#fff"/><rect x="4" y="9" width="4" height="1" fill="#fff"/><rect x="4" y="0" width="1" height="1" fill="#808080"/><rect x="5" y="0" width="1" height="1" fill="#808080"/><rect x="6" y="0" width="1" height="1" fill="#808080"/><rect x="7" y="0" width="1" height="1" fill="#808080"/><rect x="2" y="1" width="1" height="1" fill="#808080"/><rect x="3" y="1" width="1" height="1" fill="#808080"/><rect x="8" y="1" width="1" height="1" fill="#808080"/><rect x="9" y="1" width="1" height="1" fill="#808080"/><rect x="1" y="2" width="1" height="1" fill="#808080"/><rect x="10" y="2" width="1" height="1" fill="#ffffff"/><rect x="1" y="3" width="1" height="1" fill="#808080"/><rect x="10" y="3" width="1" height="1" fill="#ffffff"/><rect x="0" y="4" width="1" height="1" fill="#808080"/><rect x="11" y="4" width="1" height="1" fill="#ffffff"/><rect x="0" y="5" width="1" height="1" fill="#808080"/><rect x="11" y="5" width="1" height="1" fill="#ffffff"/><rect x="0" y="6" width="1" height="1" fill="#808080"/><rect x="11" y="6" width="1" height="1" fill="#ffffff"/><rect x="0" y="7" width="1" height="1" fill="#808080"/><rect x="11" y="7" width="1" height="1" fill="#ffffff"/><rect x="1" y="8" width="1" height="1" fill="#808080"/><rect x="10" y="8" width="1" height="1" fill="#ffffff"/><rect x="1" y="9" width="1" height="1" fill="#808080"/><rect x="10" y="9" width="1" height="1" fill="#ffffff"/><rect x="2" y="10" width="1" height="1" fill="#ffffff"/><rect x="3" y="10" width="1" height="1" fill="#ffffff"/><rect x="8" y="10" width="1" height="1" fill="#ffffff"/><rect x="9" y="10" width="1" height="1" fill="#ffffff"/><rect x="4" y="11" width="1" height="1" fill="#ffffff"/><rect x="5" y="11" width="1" height="1" fill="#ffffff"/><rect x="6" y="11" width="1" height="1" fill="#ffffff"/><rect x="7" y="11" width="1" height="1" fill="#ffffff"/><rect x="4" y="1" width="1" height="1" fill="#404040"/><rect x="5" y="1" width="1" height="1" fill="#404040"/><rect x="6" y="1" width="1" height="1" fill="#404040"/><rect x="7" y="1" width="1" height="1" fill="#404040"/><rect x="2" y="2" width="1" height="1" fill="#404040"/><rect x="3" y="2" width="1" height="1" fill="#404040"/><rect x="8" y="2" width="1" height="1" fill="#404040"/><rect x="9" y="2" width="1" height="1" fill="#d6d3ce"/><rect x="2" y="3" width="1" height="1" fill="#404040"/><rect x="9" y="3" width="1" height="1" fill="#d6d3ce"/><rect x="1" y="4" width="1" height="1" fill="#404040"/><rect x="10" y="4" width="1" height="1" fill="#d6d3ce"/><rect x="1" y="5" width="1" height="1" fill="#404040"/><rect x="10" y="5" width="1" height="1" fill="#d6d3ce"/><rect x="1" y="6" width="1" height="1" fill="#404040"/><rect x="10" y="6" width="1" height="1" fill="#d6d3ce"/><rect x="1" y="7" width="1" height="1" fill="#404040"/><rect x="10" y="7" width="1" height="1" fill="#d6d3ce"/><rect x="2" y="8" width="1" height="1" fill="#404040"/><rect x="9" y="8" width="1" height="1" fill="#d6d3ce"/><rect x="2" y="9" width="1" height="1" fill="#d6d3ce"/><rect x="3" y="9" width="1" height="1" fill="#d6d3ce"/><rect x="8" y="9" width="1" height="1" fill="#d6d3ce"/><rect x="9" y="9" width="1" height="1" fill="#d6d3ce"/><rect x="4" y="10" width="1" height="1" fill="#d6d3ce"/><rect x="5" y="10" width="1" height="1" fill="#d6d3ce"/><rect x="6" y="10" width="1" height="1" fill="#d6d3ce"/><rect x="7" y="10" width="1" height="1" fill="#d6d3ce"/></svg>
<div class="t" style="left:658px;top:112px">Prélèvement</div>
<svg class="a" style="left:642px;top:130px" width="12" height="12" shape-rendering="crispEdges"><rect x="4" y="2" width="4" height="1" fill="#fff"/><rect x="3" y="3" width="6" height="1" fill="#fff"/><rect x="2" y="4" width="8" height="1" fill="#fff"/><rect x="2" y="5" width="8" height="1" fill="#fff"/><rect x="2" y="6" width="8" height="1" fill="#fff"/><rect x="2" y="7" width="8" height="1" fill="#fff"/><rect x="3" y="8" width="6" height="1" fill="#fff"/><rect x="4" y="9" width="4" height="1" fill="#fff"/><rect x="4" y="0" width="1" height="1" fill="#808080"/><rect x="5" y="0" width="1" height="1" fill="#808080"/><rect x="6" y="0" width="1" height="1" fill="#808080"/><rect x="7" y="0" width="1" height="1" fill="#808080"/><rect x="2" y="1" width="1" height="1" fill="#808080"/><rect x="3" y="1" width="1" height="1" fill="#808080"/><rect x="8" y="1" width="1" height="1" fill="#808080"/><rect x="9" y="1" width="1" height="1" fill="#808080"/><rect x="1" y="2" width="1" height="1" fill="#808080"/><rect x="10" y="2" width="1" height="1" fill="#ffffff"/><rect x="1" y="3" width="1" height="1" fill="#808080"/><rect x="10" y="3" width="1" height="1" fill="#ffffff"/><rect x="0" y="4" width="1" height="1" fill="#808080"/><rect x="11" y="4" width="1" height="1" fill="#ffffff"/><rect x="0" y="5" width="1" height="1" fill="#808080"/><rect x="11" y="5" width="1" height="1" fill="#ffffff"/><rect x="0" y="6" width="1" height="1" fill="#808080"/><rect x="11" y="6" width="1" height="1" fill="#ffffff"/><rect x="0" y="7" width="1" height="1" fill="#808080"/><rect x="11" y="7" width="1" height="1" fill="#ffffff"/><rect x="1" y="8" width="1" height="1" fill="#808080"/><rect x="10" y="8" width="1" height="1" fill="#ffffff"/><rect x="1" y="9" width="1" height="1" fill="#808080"/><rect x="10" y="9" width="1" height="1" fill="#ffffff"/><rect x="2" y="10" width="1" height="1" fill="#ffffff"/><rect x="3" y="10" width="1" height="1" fill="#ffffff"/><rect x="8" y="10" width="1" height="1" fill="#ffffff"/><rect x="9" y="10" width="1" height="1" fill="#ffffff"/><rect x="4" y="11" width="1" height="1" fill="#ffffff"/><rect x="5" y="11" width="1" height="1" fill="#ffffff"/><rect x="6" y="11" width="1" height="1" fill="#ffffff"/><rect x="7" y="11" width="1" height="1" fill="#ffffff"/><rect x="4" y="1" width="1" height="1" fill="#404040"/><rect x="5" y="1" width="1" height="1" fill="#404040"/><rect x="6" y="1" width="1" height="1" fill="#404040"/><rect x="7" y="1" width="1" height="1" fill="#404040"/><rect x="2" y="2" width="1" height="1" fill="#404040"/><rect x="3" y="2" width="1" height="1" fill="#404040"/><rect x="8" y="2" width="1" height="1" fill="#404040"/><rect x="9" y="2" width="1" height="1" fill="#d6d3ce"/><rect x="2" y="3" width="1" height="1" fill="#404040"/><rect x="9" y="3" width="1" height="1" fill="#d6d3ce"/><rect x="1" y="4" width="1" height="1" fill="#404040"/><rect x="10" y="4" width="1" height="1" fill="#d6d3ce"/><rect x="1" y="5" width="1" height="1" fill="#404040"/><rect x="10" y="5" width="1" height="1" fill="#d6d3ce"/><rect x="1" y="6" width="1" height="1" fill="#404040"/><rect x="10" y="6" width="1" height="1" fill="#d6d3ce"/><rect x="1" y="7" width="1" height="1" fill="#404040"/><rect x="10" y="7" width="1" height="1" fill="#d6d3ce"/><rect x="2" y="8" width="1" height="1" fill="#404040"/><rect x="9" y="8" width="1" height="1" fill="#d6d3ce"/><rect x="2" y="9" width="1" height="1" fill="#d6d3ce"/><rect x="3" y="9" width="1" height="1" fill="#d6d3ce"/><rect x="8" y="9" width="1" height="1" fill="#d6d3ce"/><rect x="9" y="9" width="1" height="1" fill="#d6d3ce"/><rect x="4" y="10" width="1" height="1" fill="#d6d3ce"/><rect x="5" y="10" width="1" height="1" fill="#d6d3ce"/><rect x="6" y="10" width="1" height="1" fill="#d6d3ce"/><rect x="7" y="10" width="1" height="1" fill="#d6d3ce"/></svg>
<div class="t" style="left:658px;top:131px">Prélèvement SEPA</div>
<div class="t" style="left:203px;top:184px">Critères</div>
<div class="gl" style="left:241px;top:189px;width:625px"></div>
<div class="t" style="left:216px;top:207px">Sociétés :</div>
<div class="t" style="left:216px;top:232px">Banques :</div>
<div class="t" style="left:216px;top:257px">Banque du tiers :</div>
<div class="t" style="left:216px;top:282px">Groupe de rôle tiers :</div>
<div class="t" style="left:216px;top:307px">Type de remise :</div>
<div class="t" style="left:216px;top:332px">Devise :</div>
<div class="t" style="left:216px;top:357px">Regroupement :</div>
<div class="inp" style="left:331px;top:202px;width:440px;height:21px"></div>
<div class="ell" style="left:752px;top:204px"><svg class="a" style="left:3px;top:8px" width="9" height="2"><rect x="0" y="0" width="2" height="2" fill="#2a2a2a"/><rect x="3" y="0" width="2" height="2" fill="#2a2a2a"/><rect x="6" y="0" width="2" height="2" fill="#2a2a2a"/></svg></div>
<div class="inp" style="left:331px;top:227px;width:440px;height:21px"></div>
<div class="ell" style="left:752px;top:229px"><svg class="a" style="left:3px;top:8px" width="9" height="2"><rect x="0" y="0" width="2" height="2" fill="#2a2a2a"/><rect x="3" y="0" width="2" height="2" fill="#2a2a2a"/><rect x="6" y="0" width="2" height="2" fill="#2a2a2a"/></svg></div>
<div class="inp" style="left:331px;top:277px;width:440px;height:21px"></div>
<div class="ell" style="left:752px;top:279px"><svg class="a" style="left:3px;top:8px" width="9" height="2"><rect x="0" y="0" width="2" height="2" fill="#2a2a2a"/><rect x="3" y="0" width="2" height="2" fill="#2a2a2a"/><rect x="6" y="0" width="2" height="2" fill="#2a2a2a"/></svg></div>
<div class="inp" style="left:331px;top:302px;width:440px;height:21px"></div>
<div class="ell" style="left:752px;top:304px"><svg class="a" style="left:3px;top:8px" width="9" height="2"><rect x="0" y="0" width="2" height="2" fill="#2a2a2a"/><rect x="3" y="0" width="2" height="2" fill="#2a2a2a"/><rect x="6" y="0" width="2" height="2" fill="#2a2a2a"/></svg></div>
<div class="inp" style="left:331px;top:352px;width:440px;height:21px"></div>
<div class="inp" style="left:331px;top:252px;width:100px;height:21px"></div>
<div class="dd" style="left:412px;top:254px"><svg class="a" style="left:2px;top:1px" width="11" height="12" viewBox="0 0 11 12"><path d="M1.5 2L5.5 5.5L9.5 2M1.5 6.5L5.5 10L9.5 6.5" stroke="#2a2a2a" stroke-width="2" fill="none"/></svg></div>
<div class="dis" style="left:433px;top:251px;width:338px;height:21px"></div>
<div class="inp" style="left:331px;top:327px;width:100px;height:21px"></div>
<div class="ell" style="left:412px;top:329px"><svg class="a" style="left:3px;top:8px" width="9" height="2"><rect x="0" y="0" width="2" height="2" fill="#2a2a2a"/><rect x="3" y="0" width="2" height="2" fill="#2a2a2a"/><rect x="6" y="0" width="2" height="2" fill="#2a2a2a"/></svg></div>
<div class="chk" style="left:216px;top:378px"></div>
<div class="t" style="left:233.5px;top:379px">Montant de transfert</div>
<div class="chk" style="left:216px;top:402px"></div>
<div class="t" style="left:233.5px;top:403px">Date de création</div>
<div class="chk" style="left:216px;top:426px"></div>
<div class="t" style="left:233.5px;top:427px">Sélection origine</div>
<div class="chk" style="left:217px;top:454px"></div>
<div class="t" style="left:234.5px;top:455px">Date d'exécution</div>
<div class="t" style="left:406px;top:381px">de :</div>
<div class="dis" style="left:431px;top:376px;width:152px;height:21px"></div>
<div class="t gray" style="left:431px;top:379px;width:150px;text-align:right;letter-spacing:0px">0,00</div>
<div class="t" style="left:598px;top:381px">à</div>
<div class="dis" style="left:619px;top:376px;width:152px;height:21px"></div>
<div class="t gray" style="left:619px;top:379px;width:150px;text-align:right;letter-spacing:0px">99 999 999,00</div>
<div class="t" style="left:406px;top:404px">du :</div>
<div class="dis" style="left:431px;top:400px;width:152px;height:21px"></div>
<svg class="a" style="left:431px;top:400px" width="60" height="16"><path d="M2 14.5H14.5L16.5 4M18 14.5H30.5L32.5 4M34 14.5H58" stroke="#808080" fill="none"/></svg>
<div class="ddd" style="left:564px;top:402px"><svg class="a" style="left:2px;top:3px" width="11" height="8" viewBox="0 0 11 8"><path d="M1.8 1.6L5.5 5.2L9.2 1.6" stroke="#333" stroke-width="1.9" stroke-linecap="round" fill="none"/></svg></div>
<div class="t" style="left:596px;top:404px">au :</div>
<div class="dis" style="left:620px;top:399px;width:152px;height:21px"></div>
<svg class="a" style="left:620px;top:399px" width="60" height="16"><path d="M2 14.5H14.5L16.5 4M18 14.5H30.5L32.5 4M34 14.5H58" stroke="#808080" fill="none"/></svg>
<div class="dis" style="left:431px;top:424px;width:152px;height:21px"></div>
<div class="t gray" style="left:432px;top:427px">Saisie</div>
<div class="t" style="left:404px;top:457px">du :</div>
<div class="dis" style="left:431px;top:452px;width:152px;height:21px"></div>
<svg class="a" style="left:431px;top:452px" width="60" height="16"><path d="M2 14.5H14.5L16.5 4M18 14.5H30.5L32.5 4M34 14.5H58" stroke="#808080" fill="none"/></svg>
<div class="ddd" style="left:564px;top:454px"><svg class="a" style="left:2px;top:3px" width="11" height="8" viewBox="0 0 11 8"><path d="M1.8 1.6L5.5 5.2L9.2 1.6" stroke="#333" stroke-width="1.9" stroke-linecap="round" fill="none"/></svg></div>
<div class="t" style="left:598px;top:457px">au :</div>
<div class="dis" style="left:622px;top:452px;width:152px;height:21px"></div>
<svg class="a" style="left:622px;top:452px" width="60" height="16"><path d="M2 14.5H14.5L16.5 4M18 14.5H30.5L32.5 4M34 14.5H58" stroke="#808080" fill="none"/></svg>
</body></html>
